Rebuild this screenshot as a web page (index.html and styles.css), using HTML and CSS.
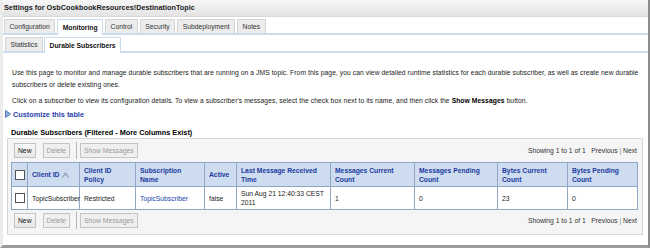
FILE: index.html
```html
<!DOCTYPE html>
<html lang="en">
<head>
  <meta charset="UTF-8">
  <title>Settings for OsbCookbookResources!DestinationTopic</title>
  <link rel="stylesheet" href="styles.css">
</head>
<body>
<div class="frame">
  <div class="titlebar">Settings for OsbCookbookResources!DestinationTopic</div>

  <div class="tabs">
    <span class="tab">Configuration</span>
    <span class="tab active">Monitoring</span>
    <span class="tab">Control</span>
    <span class="tab">Security</span>
    <span class="tab">Subdeployment</span>
    <span class="tab">Notes</span>
  </div>
  <div class="tabs subtabs">
    <span class="tab">Statistics</span>
    <span class="tab active">Durable Subscribers</span>
  </div>

  <div class="content">
    <p class="intro">Use this page to monitor and manage durable subscribers that are running on a JMS topic. From this page, you can view detailed runtime statistics for each durable subscriber, as well as create new durable subscribers or delete existing ones.</p>
    <p class="intro second">Click on a subscriber to view its configuration details. To view a subscriber's messages, select the check box next to its name, and then click the <b>Show Messages</b> button.</p>

    <div class="customize">
      <svg width="6" height="8" viewBox="0 0 6 8"><path d="M0.5 0.5 L5.5 4 L0.5 7.5 Z" fill="#8fb0dc" stroke="#3c64b4" stroke-width="0.8"/></svg>
      <a href="#">Customize this table</a>
    </div>

    <div class="tbl-title">Durable Subscribers (Filtered - More Columns Exist)</div>

    <div class="tbl-box">
      <div class="toolbar">
        <div class="btns">
          <button class="btn">New</button>
          <button class="btn off">Delete</button>
          <span class="sep"></span>
          <button class="btn off">Show Messages</button>
        </div>
        <div class="pager">Showing 1 to 1 of 1 &nbsp; Previous <span class="bar">|</span> Next</div>
      </div>

      <table class="grid">
        <colgroup>
          <col style="width:16px">
          <col style="width:52px">
          <col style="width:56px">
          <col style="width:69px">
          <col style="width:32px">
          <col style="width:94px">
          <col style="width:84px">
          <col style="width:83px">
          <col style="width:70px">
          <col>
        </colgroup>
        <thead>
          <tr>
            <th class="chk"><span class="box"></span></th>
            <th>Client ID <svg class="sort" width="9" height="6" viewBox="0 0 9 6"><path d="M1 5.5 L4.5 2 L8 5.5 M2.5 3.5 L4.5 1 L6.5 3.5" fill="none" stroke="#9aa6b8" stroke-width="1.1"/></svg></th>
            <th>Client ID Policy</th>
            <th>Subscription Name</th>
            <th>Active</th>
            <th>Last Message Received Time</th>
            <th>Messages Current Count</th>
            <th>Messages Pending Count</th>
            <th>Bytes Current Count</th>
            <th>Bytes Pending Count</th>
          </tr>
        </thead>
        <tbody>
          <tr>
            <td class="chk"><span class="box"></span></td>
            <td>TopicSubscriber</td>
            <td>Restricted</td>
            <td><a href="#">TopicSubscriber</a></td>
            <td>false</td>
            <td>Sun Aug 21 12:40:33 CEST 2011</td>
            <td>1</td>
            <td>0</td>
            <td>23</td>
            <td>0</td>
          </tr>
        </tbody>
      </table>

      <div class="toolbar bottom">
        <div class="btns">
          <button class="btn">New</button>
          <button class="btn off">Delete</button>
          <span class="sep"></span>
          <button class="btn off">Show Messages</button>
        </div>
        <div class="pager">Showing 1 to 1 of 1 &nbsp; Previous <span class="bar">|</span> Next</div>
      </div>
    </div>
  </div>
</div>
</body>
</html>
```

FILE: styles.css
```css
* {
  box-sizing: border-box;
}

html, body {
  margin: 0;
  height: 100%;
  background: #fff;
}

body {
  font-family: "Liberation Sans", Arial, sans-serif;
  font-size: 6.75px;
  color: #000;
}

.frame {
  width: 650px;
  height: 248px;
  border-right: 2px solid #8c8c8c;
  border-bottom: 3px solid #9a9a9a;
  border-left: 3px solid #ececec;
  overflow: hidden;
}

.titlebar {
  height: 17px;
  line-height: 16px;
  margin-left: -3px;
  padding-left: 4px;
  font-size: 7.3px;
  font-weight: bold;
  color: #222;
  background: linear-gradient(#f7f7f7, #e3e3e3);
  border-bottom: 1px solid #d9d9d9;
}

.tabs {
  display: flex;
  gap: 2px;
  padding: 2px 0 0 1px;
  height: 18px;
  border-bottom: 2px solid #cbdcee;
}

.tab {
  display: flex;
  align-items: center;
  padding: 0 4.5px;
  background: #ececec;
  border: 1px solid #d4d4d4;
  border-bottom: none;
  color: #333;
}

.tab.active {
  background: #fff;
  border-color: #cbdcee;
  font-weight: bold;
  color: #111;
  margin-bottom: -2px;
}

.subtabs {
  padding: 2px 0 0 2px;
  gap: 1px;
}

.content {
  padding: 14px 0 0 9px;
}

.intro {
  margin: 0;
  line-height: 12px;
  letter-spacing: 0.06px;
  color: #222;
}

.intro.second {
  margin-top: 4px;
}

.intro b {
  color: #000;
}

.customize {
  display: flex;
  align-items: center;
  gap: 2px;
  height: 12px;
  margin: 1px 0 0 -7px;
}

.customize a {
  color: #1f3ea8;
  font-weight: bold;
  font-size: 7.3px;
  text-decoration: none;
}

.tbl-title {
  font-weight: bold;
  font-size: 7.3px;
  line-height: 10px;
  margin: 8px 0 0 -1px;
}

.tbl-box {
  margin: 0 5px 0 -5px;
  background: #f5f5f5;
  border: 1px solid #d7d7d7;
  padding: 4px 4px 6px 3px;
}

.toolbar {
  display: flex;
  justify-content: space-between;
  align-items: center;
  padding: 0 1px 0 3px;
  height: 15px;
  margin-bottom: 4px;
}

.toolbar.bottom {
  margin: 3px 0 0;
}

.btns {
  display: flex;
  align-items: center;
  gap: 7px;
}

.btn {
  font-family: inherit;
  font-size: 6.75px;
  height: 15px;
  padding: 0 3px;
  background: linear-gradient(#f8f8f8, #e6e6e6);
  border: 1px solid #c4c4c4;
  color: #111;
}

.btn.off {
  color: #9a9a9a;
  background: #efefef;
}

.sep {
  width: 1px;
  height: 17px;
  background: #b5b5b5;
  margin: 0 -4px 0 -1px;
}

.pager {
  color: #333;
}

.bar {
  color: #888;
}

.grid {
  width: 627px;
  table-layout: fixed;
  border-collapse: collapse;
  background: #fff;
  border: 1px solid #90a6c4;
}

.grid th {
  background: #cddcef;
  color: #1c3aa0;
  font-weight: bold;
  text-align: left;
  vertical-align: middle;
  height: 24px;
  padding: 0 3px 0 4px;
  line-height: 9px;
  border: 1px solid #90a6c4;
}

.grid td {
  height: 23px;
  padding: 0 3px 0 4px;
  line-height: 9px;
  border: 1px solid #90a6c4;
  color: #222;
}

.grid td a {
  color: #2044aa;
  text-decoration: none;
}

.grid .chk {
  padding: 0;
}

.sort {
  vertical-align: middle;
}

.box {
  display: block;
  width: 10px;
  height: 10px;
  border: 1px solid #555;
  background: #fff;
  margin: 0 auto;
}
```
